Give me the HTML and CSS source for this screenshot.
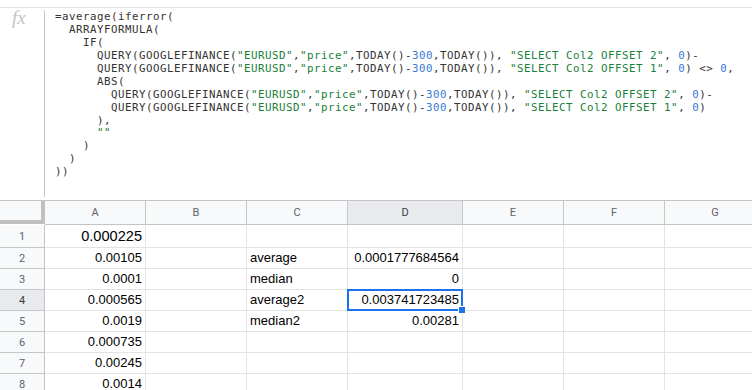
FILE: index.html
```html
<!DOCTYPE html>
<html>
<head>
  <meta charset="UTF-8">
  <title>EURUSD volatility - Sheet</title>
  <link rel="stylesheet" href="styles.css">
</head>
<body>
  <div class="formula-bar">
    <div class="fx">fx</div>
    <div class="formula">
      <div class="ln">=average(iferror(</div>
      <div class="ln">  ARRAYFORMULA(</div>
      <div class="ln">    IF(</div>
      <div class="ln">      QUERY(GOOGLEFINANCE(<span class="str">"EURUSD"</span>,<span class="str">"price"</span>,TODAY()-<span class="num-lit">300</span>,TODAY()), <span class="str">"SELECT Col2 OFFSET 2"</span>, <span class="num-lit">0</span>)-</div>
      <div class="ln">      QUERY(GOOGLEFINANCE(<span class="str">"EURUSD"</span>,<span class="str">"price"</span>,TODAY()-<span class="num-lit">300</span>,TODAY()), <span class="str">"SELECT Col2 OFFSET 1"</span>, <span class="num-lit">0</span>) &lt;&gt; <span class="num-lit">0</span>,</div>
      <div class="ln">      ABS(</div>
      <div class="ln">        QUERY(GOOGLEFINANCE(<span class="str">"EURUSD"</span>,<span class="str">"price"</span>,TODAY()-<span class="num-lit">300</span>,TODAY()), <span class="str">"SELECT Col2 OFFSET 2"</span>, <span class="num-lit">0</span>)-</div>
      <div class="ln">        QUERY(GOOGLEFINANCE(<span class="str">"EURUSD"</span>,<span class="str">"price"</span>,TODAY()-<span class="num-lit">300</span>,TODAY()), <span class="str">"SELECT Col2 OFFSET 1"</span>, <span class="num-lit">0</span>)</div>
      <div class="ln">      ),</div>
      <div class="ln">      <span class="str">""</span></div>
      <div class="ln">    )</div>
      <div class="ln">  )</div>
      <div class="ln">))</div>
    </div>
  </div>

  <div class="sheet">
    <div class="corner"></div>
    <div class="ch">A</div>
    <div class="ch">B</div>
    <div class="ch">C</div>
    <div class="ch active">D</div>
    <div class="ch">E</div>
    <div class="ch">F</div>
    <div class="ch">G</div>

    <div class="rh">1</div>
    <div class="c num big">0.000225</div>
    <div class="c"></div>
    <div class="c"></div>
    <div class="c"></div>
    <div class="c"></div>
    <div class="c"></div>
    <div class="c"></div>

    <div class="rh">2</div>
    <div class="c num">0.00105</div>
    <div class="c"></div>
    <div class="c">average</div>
    <div class="c num">0.0001777684564</div>
    <div class="c"></div>
    <div class="c"></div>
    <div class="c"></div>

    <div class="rh">3</div>
    <div class="c num">0.0001</div>
    <div class="c"></div>
    <div class="c">median</div>
    <div class="c num">0</div>
    <div class="c"></div>
    <div class="c"></div>
    <div class="c"></div>

    <div class="rh active">4</div>
    <div class="c num">0.000565</div>
    <div class="c"></div>
    <div class="c">average2</div>
    <div class="c num selected">0.003741723485</div>
    <div class="c"></div>
    <div class="c"></div>
    <div class="c"></div>

    <div class="rh">5</div>
    <div class="c num">0.0019</div>
    <div class="c"></div>
    <div class="c">median2</div>
    <div class="c num">0.00281</div>
    <div class="c"></div>
    <div class="c"></div>
    <div class="c"></div>

    <div class="rh">6</div>
    <div class="c num">0.000735</div>
    <div class="c"></div>
    <div class="c"></div>
    <div class="c"></div>
    <div class="c"></div>
    <div class="c"></div>
    <div class="c"></div>

    <div class="rh">7</div>
    <div class="c num">0.00245</div>
    <div class="c"></div>
    <div class="c"></div>
    <div class="c"></div>
    <div class="c"></div>
    <div class="c"></div>
    <div class="c"></div>

    <div class="rh">8</div>
    <div class="c num">0.0014</div>
    <div class="c"></div>
    <div class="c"></div>
    <div class="c"></div>
    <div class="c"></div>
    <div class="c"></div>
    <div class="c"></div>
  </div>
</body>
</html>
```

FILE: styles.css
```css
body {
  margin: 0;
  background: #ffffff;
  width: 752px;
  height: 390px;
  overflow: hidden;
  font-family: 'Liberation Sans', Arial, sans-serif;
}
.formula-bar {
  display: flex;
  margin-top: 7px;
  height: 192px;
  border-top: 1px solid #e1e1e1;
}
.fx {
  width: 44px;
  flex: none;
  box-sizing: border-box;
  padding: 0 0 0 12px;
  font-family: 'Liberation Serif', 'Times New Roman', serif;
  font-style: italic;
  font-size: 19px;
  line-height: 20px;
  color: #c4c4c4;
}
.formula {
  flex: 1;
  margin: 2px 0 3px;
  padding: 1px 0 0 10px;
  border-left: 1px solid #c7c7c7;
  font-family: 'DejaVu Sans Mono', 'Liberation Mono', monospace;
  font-size: 10.8px;
  letter-spacing: 0.5px;
  color: #333333;
  overflow: hidden;
}
.formula .ln {
  height: 12.95px;
  line-height: 12.95px;
  white-space: pre;
}
.formula .str {
  color: #188038;
}
.formula .num-lit {
  color: #3c78d8;
}
.sheet {
  display: grid;
  grid-template-columns: 45px 101px 101px 101px 115px 101px 101px 101px;
  grid-template-rows: 24px 23px repeat(7, 21px);
  border-top: 1px solid #c4c4c4;
}
.sheet > div {
  box-sizing: border-box;
  border-right: 1px solid #e2e3e3;
  border-bottom: 1px solid #e2e3e3;
}
.sheet > .corner {
  background: #f8f9fa;
  border-right: 4px solid #c0c0c0;
  border-bottom: 4px solid #c0c0c0;
  margin-bottom: 1px;
}
.ch, .rh {
  background: #f8f9fa;
  color: #5f6368;
  font-family: Roboto, 'Liberation Sans', sans-serif;
  font-size: 11px;
  display: flex;
  align-items: center;
  justify-content: center;
}
.sheet > .ch {
  border-right-color: #c4c7c5;
  border-bottom-color: #c4c4c4;
}
.sheet > .rh {
  border-right-color: #c4c4c4;
  border-bottom-color: #c4c7c5;
}
.ch.active, .rh.active {
  background: #e8eaed;
  color: #3c4043;
}
.c {
  display: flex;
  align-items: flex-end;
  padding: 0 3px 2px;
  font-size: 13px;
  line-height: 16px;
  color: #000000;
  white-space: nowrap;
}
.c.num {
  justify-content: flex-end;
}
.c.big {
  font-size: 14.6px;
  line-height: 18px;
}
.selected {
  position: relative;
}
.selected::after {
  content: "";
  position: absolute;
  top: -1px;
  left: -1px;
  right: -1px;
  bottom: -1px;
  border: 2px solid #1a73e8;
}
.selected::before {
  content: "";
  position: absolute;
  right: -4px;
  bottom: -4px;
  width: 6px;
  height: 6px;
  background: #1a73e8;
  border: 1px solid #ffffff;
  z-index: 1;
}
```
